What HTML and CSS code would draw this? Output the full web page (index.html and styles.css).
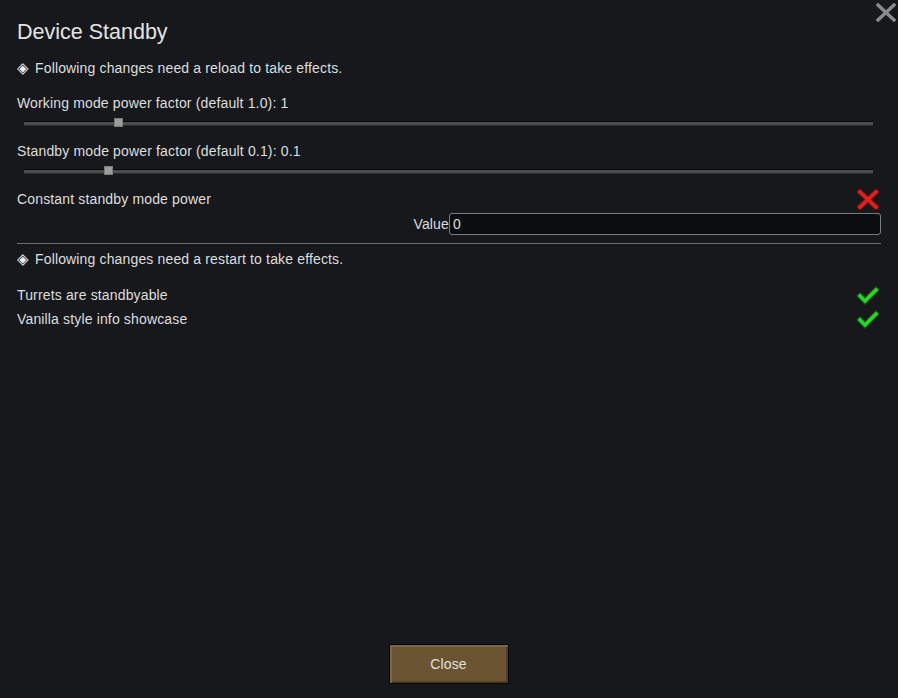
FILE: index.html
```html
<!DOCTYPE html>
<html>
<head>
<meta charset="utf-8">
<link rel="stylesheet" href="styles.css">
</head>
<body>
<div class="window">
  <button class="close-x" aria-label="Close">
    <svg width="20" height="19" viewBox="0 0 20 19"><path d="M2 2 L18 17 M18 2 L2 17" stroke="#8b8b8b" stroke-width="3.4" stroke-linecap="square"/></svg>
  </button>
  <div class="content">
    <h1 class="title">Device Standby</h1>
    <div class="row note gap-title"><span class="dia">◈</span>Following changes need a reload to take effects.</div>
    <div class="row gap-15">Working mode power factor (default 1.0): 1</div>
    <div class="slider-row"><div class="track"><div class="thumb" style="left: 11.1%"></div></div></div>
    <div class="row gap-8">Standby mode power factor (default 0.1): 0.1</div>
    <div class="slider-row"><div class="track"><div class="thumb" style="left: 9.9%"></div></div></div>
    <div class="row gap-8 spread">
      <span>Constant standby mode power</span>
      <svg class="icon" width="22" height="21" viewBox="0 0 22 21"><path d="M3 3 L19 18 M19 3 L3 18" stroke="#7a1010" stroke-width="5.4" stroke-linecap="square"/><path d="M3 3 L19 18 M19 3 L3 18" stroke="#df2020" stroke-width="3.6" stroke-linecap="square"/></svg>
    </div>
    <div class="value-row">
      <span class="value-label">Value</span>
      <div class="input">0</div>
    </div>
    <div class="divider"></div>
    <div class="row note gap-5"><span class="dia">◈</span>Following changes need a restart to take effects.</div>
    <div class="row gap-16 spread">
      <span>Turrets are standbyable</span>
      <svg class="icon" width="22" height="19" viewBox="0 0 22 19"><path d="M3 10 L8 15 L19 4" fill="none" stroke="#0d5a0d" stroke-width="5.6" stroke-linecap="square" stroke-linejoin="miter"/><path d="M3 10 L8 15 L19 4" fill="none" stroke="#2ed42e" stroke-width="3.4" stroke-linecap="square" stroke-linejoin="miter"/></svg>
    </div>
    <div class="row gap-4 spread">
      <span>Vanilla style info showcase</span>
      <svg class="icon" width="22" height="19" viewBox="0 0 22 19"><path d="M3 10 L8 15 L19 4" fill="none" stroke="#0d5a0d" stroke-width="5.6" stroke-linecap="square" stroke-linejoin="miter"/><path d="M3 10 L8 15 L19 4" fill="none" stroke="#2ed42e" stroke-width="3.4" stroke-linecap="square" stroke-linejoin="miter"/></svg>
    </div>
  </div>
  <div class="footer">
    <button class="close-btn">Close</button>
  </div>
</div>
</body>
</html>
```
FILE: styles.css
```css
html, body {
  margin: 0;
  padding: 0;
  background: #16181c;
}
body {
  font-family: "Liberation Sans", Arial, sans-serif;
  color: #dedede;
  font-size: 14px;
  letter-spacing: 0.15px;
}
.window {
  position: relative;
  width: 898px;
  height: 698px;
  display: flex;
  flex-direction: column;
  box-sizing: border-box;
}
.close-x {
  position: absolute;
  top: 3px;
  right: 2px;
  background: none;
  border: 0;
  padding: 0;
  width: 20px;
  height: 19px;
  display: block;
}
.close-x svg { display: block; }
.content {
  padding: 0 17px;
  display: flex;
  flex-direction: column;
}
.title {
  margin: 20px 0 0 0;
  font-size: 21.5px;
  font-weight: normal;
  letter-spacing: 0;
  line-height: 24px;
  height: 24px;
  color: #e4e4e4;
}
.row {
  height: 20px;
  line-height: 20px;
  display: flex;
  align-items: center;
  white-space: nowrap;
}
.dia {
  font-family: "DejaVu Sans", sans-serif;
  font-size: 15px;
  color: #f0f0f0;
  width: 18px;
}
.spread {
  justify-content: space-between;
  padding-right: 2px;
}
.gap-title { margin-top: 14px; }
.gap-15 { margin-top: 15px; }
.gap-16 { margin-top: 16px; }
.gap-8 { margin-top: 8px; }
.gap-5 { margin-top: 5px; }
.gap-4 { margin-top: 4px; }
.icon { display: block; }
.slider-row {
  height: 20px;
  display: flex;
  align-items: center;
  padding: 0 8px 0 7px;
}
.track {
  position: relative;
  flex: 1;
  height: 3px;
  background: #4d4d4d;
  border-top: 1px solid #08090a;
  border-bottom: 1px solid #2a2a2a;
  border-radius: 1px;
}
.thumb {
  position: absolute;
  top: -4px;
  width: 9px;
  height: 9px;
  margin-left: -4px;
  background: #9c9c9c;
  border: 1px solid #7a7a7a;
  box-sizing: border-box;
}
.value-row {
  margin-top: 4px;
  height: 22px;
  display: flex;
  align-items: center;
}
.value-label {
  width: 432px;
  text-align: right;
}
.input {
  flex: 1;
  height: 22px;
  box-sizing: border-box;
  background: #0b0c0e;
  border: 1px solid #7c7c7c;
  border-radius: 3px;
  padding: 0 3px;
  line-height: 20px;
  font-size: 14px;
  color: #dedede;
}
.divider {
  margin-top: 8px;
  height: 1px;
  background: #6e6e6e;
}
.footer {
  margin-top: auto;
  padding-bottom: 14px;
  display: flex;
  justify-content: center;
}
.close-btn {
  width: 120px;
  height: 40px;
  margin-left: -1px;
  background: #6a5431;
  border: 1px solid #000;
  box-shadow: inset 2px 2px 0 #7d6742, inset -2px -2px 0 #4e3d20;
  color: #e0e0e0;
  font-family: "Liberation Sans", Arial, sans-serif;
  font-size: 14px;
  letter-spacing: 0.15px;
  padding: 0;
}
```
